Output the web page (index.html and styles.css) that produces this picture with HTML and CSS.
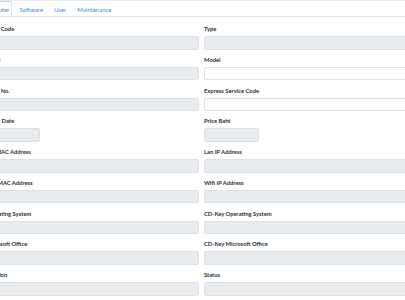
FILE: index.html
```html
<!DOCTYPE html>
<html>
<head>
<meta charset="utf-8">
<link rel="stylesheet" href="styles.css">
</head>
<body>
<div class="card">
  <div class="tabs">
    <div class="tab active">Computer</div>
    <div class="tab">Software</div>
    <div class="tab">User</div>
    <div class="tab">Maintenance</div>
  </div>
  <div class="form">
    <div class="field"><label>Asset Code</label><div class="input"></div></div>
    <div class="field"><label>Type</label><div class="input"></div></div>
    <div class="field"><label>Brand</label><div class="input"></div></div>
    <div class="field"><label>Model</label><div class="input white"></div></div>
    <div class="field"><label>Serial No.</label><div class="input"></div></div>
    <div class="field"><label>Express Service Code</label><div class="input white"></div></div>
    <div class="field"><label>Order Date</label><div class="input short"></div></div>
    <div class="field"><label>Price Baht</label><div class="input short"></div></div>
    <div class="field"><label>Lan MAC Address</label><div class="input"></div></div>
    <div class="field"><label>Lan IP Address</label><div class="input"></div></div>
    <div class="field"><label>Wifi MAC Address</label><div class="input"></div></div>
    <div class="field"><label>Wifi IP Address</label><div class="input"></div></div>
    <div class="field"><label>Operating System</label><div class="input"></div></div>
    <div class="field"><label>CD-Key Operating System</label><div class="input"></div></div>
    <div class="field"><label>Microsoft Office</label><div class="input"></div></div>
    <div class="field"><label>CD-Key Microsoft Office</label><div class="input"></div></div>
    <div class="field"><label>Location</label><div class="input"></div></div>
    <div class="field"><label>Status</label><div class="input"></div></div>
  </div>
</div>
</body>
</html>
```

FILE: styles.css
```css
html, body {
  margin: 0;
  padding: 0;
  background: #ffffff;
  overflow: hidden;
}
body {
  width: 405px;
  height: 300px;
  font-family: Lato, "Open Sans", "Liberation Sans", sans-serif;
  color: #212529;
}
.card {
  margin-left: -15px;
  width: 440px;
  border-top: 1px solid #e9ecef;
}
.tabs {
  display: flex;
  height: 15px;
  margin-left: -5px;
  border-bottom: 1px solid #dee2e6;
}
.tab {
  font-size: 6px;
  line-height: 17px;
  padding: 0 5.5px;
  color: #3b8de0;
}
.tab.active {
  color: #6c7a89;
  padding: 0 2px 0 3px;
  margin-right: 1.5px;
  border-right: 1px solid #dee2e6;
  box-shadow: inset 0 1px 0 #b9d6f3;
  background: #fff;
}
.form {
  display: grid;
  grid-template-columns: 214px 216px;
  column-gap: 5px;
  padding-top: 7px;
}
.field {
  display: flex;
  flex-direction: column;
  align-items: flex-start;
  margin-bottom: 5.25px;
}
.field label {
  font-size: 5.8px;
  font-weight: 700;
  line-height: 9px;
  margin-bottom: 3px;
  color: #2b3035;
}
.input {
  width: 100%;
  height: 13.5px;
  box-sizing: border-box;
  border: 1px solid #dde1e5;
  border-radius: 2px;
  background: #e9ecef;
}
.input.white {
  background: #ffffff;
}
.input.short {
  width: 55px;
}
```
